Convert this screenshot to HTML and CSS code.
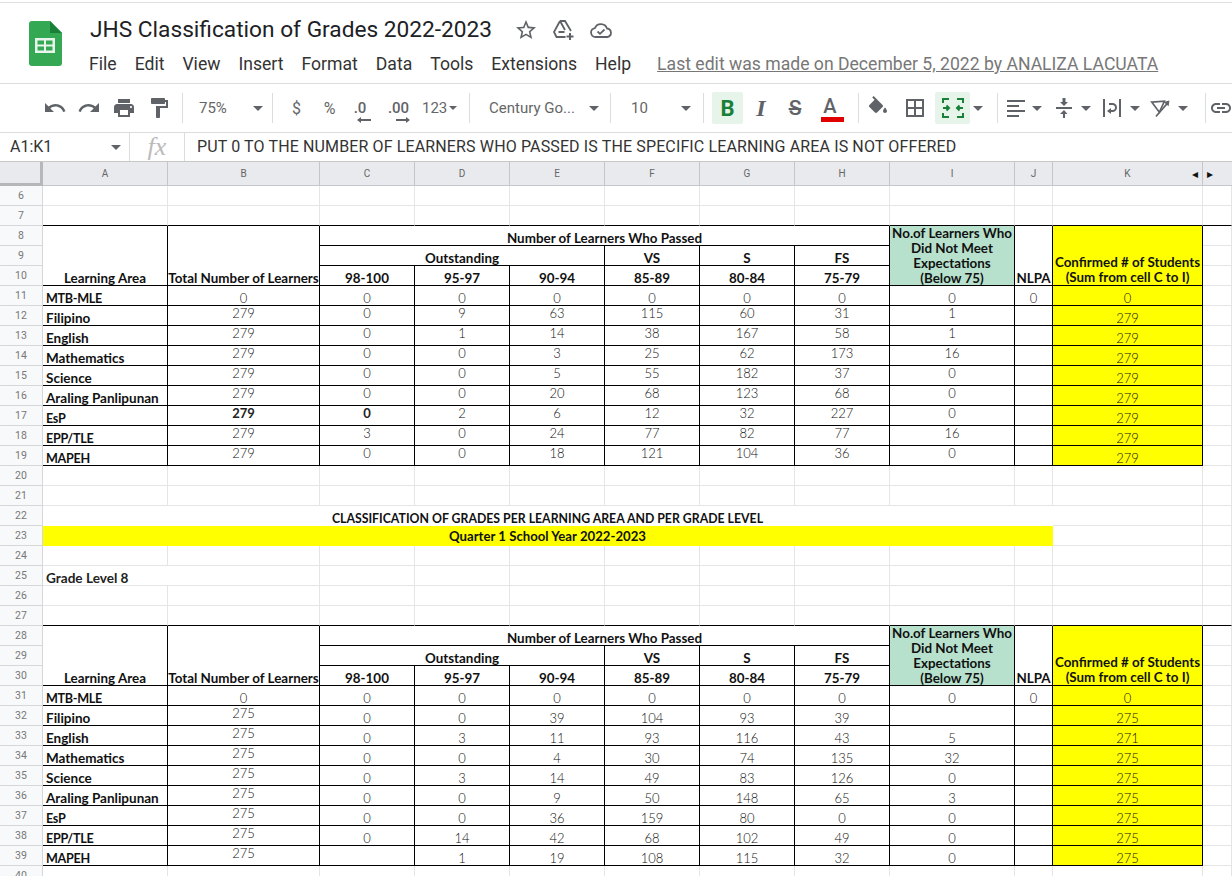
FILE: index.html
```html
<!DOCTYPE html>
<html lang="en">
<head>
<meta charset="utf-8">
<title>JHS Classification of Grades 2022-2023</title>
<link rel="stylesheet" href="styles.css">
</head>
<body>
<header class="top">
  <svg class="logo" width="33" height="45" viewBox="0 0 33 45">
    <path d="M3 0h18l12 12v30a3 3 0 0 1-3 3H3a3 3 0 0 1-3-3V3a3 3 0 0 1 3-3z" fill="#34a853"/>
    <path d="M21 0l12 12H21z" fill="#188038"/>
    <path d="M6 17h20v15H6z" fill="#e8f5ec"/>
    <path d="M8.500 19.500h6.500v4H8.500zM17 19.500h6.500v4H17zM8.500 25.500h6.500v4H8.500zM17 25.500h6.500v4H17z" fill="#34a853"/>
  </svg>
  <div class="doc">
    <div class="title-row">
      <h1 class="title">JHS Classification of Grades 2022-2023</h1>
      <svg class="ti star" width="24" height="24" viewBox="0 0 24 24"><path fill="#5f6368" d="M22 9.240l-7.190-.620L12 2 9.190 8.630 2 9.240l5.460 4.730L5.820 21 12 17.270 18.180 21l-1.630-7.030L22 9.240zM12 15.400l-3.760 2.270 1-4.280-3.320-2.880 4.380-.380L12 6.100l1.710 4.040 4.380.380-3.320 2.880 1 4.280L12 15.400z"/></svg>
      <svg class="ti drive" width="24" height="24" viewBox="0 0 24 24" fill="none" stroke="#5f6368" stroke-width="1.800"><path d="M9 3h5l6 10M9 3L3 14l2.500 5h9M9 3l5 9M7.500 14h6"/><path d="M19 15v7M15.500 18.500h7" stroke-width="2"/></svg>
      <svg class="ti cloud" width="24" height="24" viewBox="0 0 24 24" fill="none" stroke="#5f6368" stroke-width="1.800"><path d="M6.500 19a4.500 4.500 0 0 1-.6-8.950A6.500 6.500 0 0 1 18 10.500a4.300 4.300 0 0 1 .5 8.500z"/><path d="M8.500 13.500l2.500 2.300 4.500-4.300"/></svg>
    </div>
    <nav class="menu">
      <span>File</span><span>Edit</span><span>View</span><span>Insert</span><span>Format</span><span>Data</span><span>Tools</span><span>Extensions</span><span>Help</span>
      <a class="last-edit">Last edit was made on December 5, 2022 by ANALIZA LACUATA</a>
    </nav>
  </div>
</header>

<div class="toolbar">
  <span class="tool w34"><svg width="24" height="24" viewBox="0 0 24 24"><path d="M12.500 8c-2.650 0-5.050.990-6.900 2.600L2 7v9h9l-3.620-3.620c1.390-1.160 3.160-1.880 5.120-1.880 3.540 0 6.550 2.310 7.600 5.500l2.370-.780C21.080 11.030 17.150 8 12.500 8z"/></svg></span>
  <span class="tool w34"><svg width="24" height="24" viewBox="0 0 24 24"><path d="M18.400 10.600C16.550 8.990 14.150 8 11.500 8c-4.650 0-8.580 3.030-9.960 7.220L3.900 16c1.050-3.190 4.050-5.500 7.600-5.500 1.950 0 3.730.720 5.120 1.880L13 16h9V7l-3.600 3.600z"/></svg></span>
  <span class="tool w35"><svg width="24" height="24" viewBox="0 0 24 24"><path d="M19 8H5c-1.660 0-3 1.340-3 3v6h4v4h12v-4h4v-6c0-1.660-1.340-3-3-3zm-3 11H8v-5h8v5zm3-7c-.550 0-1-.450-1-1s.450-1 1-1 1 .450 1 1-.450 1-1 1zm-1-9H6v4h12V3z"/></svg></span>
  <span class="tool w35"><svg width="24" height="24" viewBox="0 0 24 24"><path d="M18 4V3c0-.550-.450-1-1-1H5c-.550 0-1 .450-1 1v4c0 .550.450 1 1 1h12c.550 0 1-.450 1-1V6h1v4H9v11c0 .550.450 1 1 1h2c.550 0 1-.450 1-1v-9h8V4h-3z"/></svg></span>
  <span class="sep s6"></span>
  <span class="pick w89 pl16 pr9">75%<i class="caret"></i></span>
  <span class="sep after6"></span>
  <span class="tool w35 sym">$</span>
  <span class="tool w31 sym">%</span>
  <span class="tool w30 dec">.0<svg class="arrow" width="14" height="6" viewBox="0 0 14 6"><path d="M0 3l4-3v2h10v2H4v2z"/></svg></span>
  <span class="tool w47 dec">.00<svg class="arrow" width="14" height="6" viewBox="0 0 14 6"><path d="M14 3l-4-3v2H0v2h10v2z"/></svg></span>
  <span class="pick w47">123<i class="caret small"></i></span>
  <span class="sep"></span>
  <span class="pick w140 pl19 pr11">Century Go...<i class="caret"></i></span>
  <span class="sep"></span>
  <span class="pick w92 pl20 pr12">10<i class="caret"></i></span>
  <span class="sep s7"></span>
  <span class="tool w31 on bold">B</span>
  <span class="tool w36 ital">I</span>
  <span class="tool w32 strike">S</span>
  <span class="tool w38 color">A<i class="red"></i></span>
  <span class="sep s9"></span>
  <span class="tool w38"><svg width="24" height="24" viewBox="0 0 24 24"><path d="M16.560 8.940L7.620 0 6.210 1.410l2.380 2.380-5.150 5.150c-.590.590-.590 1.540 0 2.120l5.500 5.500c.290.290.680.440 1.060.440s.770-.150 1.060-.440l5.500-5.500c.590-.580.590-1.530 0-2.120zM19 11.500s-2 2.170-2 3.500c0 1.100.900 2 2 2s2-.900 2-2c0-1.330-2-3.500-2-3.500z"/></svg></span>
  <span class="tool w36"><svg width="24" height="24" viewBox="0 0 24 24"><path d="M3 3v18h18V3H3zm8 16H5v-6h6v6zm0-8H5V5h6v6zm8 8h-6v-6h6v6zm0-8h-6V5h6v6z"/></svg></span>
  <span class="tool w35 ml2 on"><svg width="24" height="24" viewBox="0 0 24 24" fill="none" stroke="#188038" stroke-width="2"><path d="M2 7V3h6M16 3h6v4M22 17v4h-6M8 21H2v-4"/><path d="M2 12h6M5.500 9.500L8 12l-2.500 2.500M22 12h-6M18.500 9.500L16 12l2.500 2.500"/></svg></span>
  <span class="pick w16 center"><i class="caret"></i></span>
  <span class="sep s11"></span>
  <span class="pick w46 pl8 gap6"><svg width="20" height="24" viewBox="0 0 20 24"><path d="M1 4h18v2H1zM1 9h12v2H1zM1 14h18v2H1zM1 19h12v2H1z"/></svg><i class="caret"></i></span>
  <span class="pick w52 pl8 gap5"><svg width="24" height="24" viewBox="0 0 24 24"><path d="M4 11h16v2H4zM12 2l-1.500 0v4H8l4 4 4-4h-2.500V2zM11 22h2v-4h2.500L12 14l-4 4h3z"/></svg><i class="caret"></i></span>
  <span class="pick w49 pl4 gap6"><svg width="24" height="24" viewBox="0 0 24 24"><path d="M3 3h2v18H3zM19 3h2v18h-2z"/><path d="M9 8h3.500a3 3 0 0 1 0 7H10" fill="none" stroke="#5f6368" stroke-width="2"/><path d="M11 12l-4 3 4 3z"/></svg><i class="caret"></i></span>
  <span class="pick w49 pl5 gap6"><svg width="22" height="22" viewBox="0 0 26 24"><path d="M2 5l15-1-6 13z" fill="none" stroke="#5f6368" stroke-width="2"/><path d="M7 22L21 6" stroke="#5f6368" stroke-width="2"/><path d="M23 3l-1 7-6-5z"/></svg><i class="caret"></i></span>
  <span class="sep s11"></span>
  <span class="tool w30 link"><svg width="24" height="24" viewBox="0 0 24 24"><path d="M3.900 12c0-1.710 1.390-3.100 3.100-3.100h4V7H7c-2.760 0-5 2.240-5 5s2.240 5 5 5h4v-1.900H7c-1.710 0-3.100-1.390-3.100-3.100zM8 13h8v-2H8v2zm9-6h-4v1.900h4c1.710 0 3.100 1.390 3.100 3.100s-1.390 3.100-3.100 3.100h-4V17h4c2.760 0 5-2.240 5-5s-2.240-5-5-5z"/></svg></span>
</div>

<div class="formula">
  <div class="namebox">A1:K1<i class="caret"></i></div>
  <div class="fx">fx</div>
  <div class="ftext">PUT 0 TO THE NUMBER OF LEARNERS WHO PASSED IS THE SPECIFIC LEARNING AREA IS NOT OFFERED</div>
</div>

<main class="grid-wrap">
<table class="sheet">
  <colgroup>
    <col class="c-rh"><col class="c-a"><col class="c-b"><col class="c-n"><col class="c-n"><col class="c-n"><col class="c-n"><col class="c-n"><col class="c-n"><col class="c-a"><col class="c-j"><col class="c-k"><col class="c-l">
  </colgroup>
  <thead>
    <tr><th class="corner"></th><th>A</th><th>B</th><th>C</th><th>D</th><th>E</th><th>F</th><th>G</th><th>H</th><th>I</th><th>J</th><th class="kh">K<span class="scroll">&#9666;</span></th><th class="lh">&#9656;</th></tr>
  </thead>
  <tbody>
    <tr><th>6</th><td></td><td></td><td></td><td></td><td></td><td></td><td></td><td></td><td></td><td></td><td></td><td></td></tr>
    <tr class="edge"><th>7</th><td></td><td></td><td></td><td></td><td></td><td></td><td></td><td></td><td></td><td></td><td></td><td></td></tr>

    <tr><th>8</th><td class="k hd" rowspan="3">Learning Area</td><td class="k hd" rowspan="3">Total Number of Learners</td><td class="k hd" colspan="6">Number of Learners Who Passed</td><td class="k hd green" rowspan="3"><div class="note">No.of Learners Who Did Not Meet Expectations (Below 75)</div></td><td class="k hd" rowspan="3">NLPA</td><td class="k hd yellow two" rowspan="3">Confirmed # of Students<br>(Sum from cell C to I)</td><td></td></tr>
    <tr><th>9</th><td class="k hd" colspan="3">Outstanding</td><td class="k hd">VS</td><td class="k hd">S</td><td class="k hd">FS</td><td></td></tr>
    <tr><th>10</th><td class="k hd">98-100</td><td class="k hd">95-97</td><td class="k hd">90-94</td><td class="k hd">85-89</td><td class="k hd">80-84</td><td class="k hd">75-79</td><td></td></tr>

    <tr><th>11</th><td class="k lbl caps">MTB-MLE</td><td class="k">0</td><td class="k">0</td><td class="k">0</td><td class="k">0</td><td class="k">0</td><td class="k">0</td><td class="k">0</td><td class="k">0</td><td class="k">0</td><td class="k yellow">0</td><td></td></tr>
    <tr class="up"><th>12</th><td class="k lbl">Filipino</td><td class="k">279</td><td class="k">0</td><td class="k">9</td><td class="k">63</td><td class="k">115</td><td class="k">60</td><td class="k">31</td><td class="k">1</td><td class="k"></td><td class="k yellow">279</td><td></td></tr>
    <tr class="up"><th>13</th><td class="k lbl">English</td><td class="k">279</td><td class="k">0</td><td class="k">1</td><td class="k">14</td><td class="k">38</td><td class="k">167</td><td class="k">58</td><td class="k">1</td><td class="k"></td><td class="k yellow">279</td><td></td></tr>
    <tr class="up"><th>14</th><td class="k lbl">Mathematics</td><td class="k">279</td><td class="k">0</td><td class="k">0</td><td class="k">3</td><td class="k">25</td><td class="k">62</td><td class="k">173</td><td class="k">16</td><td class="k"></td><td class="k yellow">279</td><td></td></tr>
    <tr class="up"><th>15</th><td class="k lbl">Science</td><td class="k">279</td><td class="k">0</td><td class="k">0</td><td class="k">5</td><td class="k">55</td><td class="k">182</td><td class="k">37</td><td class="k">0</td><td class="k"></td><td class="k yellow">279</td><td></td></tr>
    <tr class="up"><th>16</th><td class="k lbl">Araling Panlipunan</td><td class="k">279</td><td class="k">0</td><td class="k">0</td><td class="k">20</td><td class="k">68</td><td class="k">123</td><td class="k">68</td><td class="k">0</td><td class="k"></td><td class="k yellow">279</td><td></td></tr>
    <tr class="up"><th>17</th><td class="k lbl caps">EsP</td><td class="k strong">279</td><td class="k strong">0</td><td class="k">2</td><td class="k">6</td><td class="k">12</td><td class="k">32</td><td class="k">227</td><td class="k">0</td><td class="k"></td><td class="k yellow">279</td><td></td></tr>
    <tr class="up"><th>18</th><td class="k lbl caps">EPP/TLE</td><td class="k">279</td><td class="k">3</td><td class="k">0</td><td class="k">24</td><td class="k">77</td><td class="k">82</td><td class="k">77</td><td class="k">16</td><td class="k"></td><td class="k yellow">279</td><td></td></tr>
    <tr class="up"><th>19</th><td class="k lbl caps">MAPEH</td><td class="k">279</td><td class="k">0</td><td class="k">0</td><td class="k">18</td><td class="k">121</td><td class="k">104</td><td class="k">36</td><td class="k">0</td><td class="k"></td><td class="k yellow">279</td><td></td></tr>

    <tr><th>20</th><td></td><td></td><td></td><td></td><td></td><td></td><td></td><td></td><td></td><td></td><td></td><td></td></tr>
    <tr><th>21</th><td></td><td></td><td></td><td></td><td></td><td></td><td></td><td></td><td></td><td></td><td></td><td></td></tr>
    <tr><th>22</th><td class="hd plain banner" colspan="10">CLASSIFICATION OF GRADES PER LEARNING AREA AND PER GRADE LEVEL</td><td></td><td></td></tr>
    <tr><th>23</th><td class="hd yellow plain quarter" colspan="10">Quarter 1 School Year 2022-2023</td><td></td><td></td></tr>
    <tr><th>24</th><td></td><td></td><td></td><td></td><td></td><td></td><td></td><td></td><td></td><td></td><td></td><td></td></tr>
    <tr><th>25</th><td class="grade" colspan="2">Grade Level 8</td><td></td><td></td><td></td><td></td><td></td><td></td><td></td><td></td><td></td><td></td></tr>
    <tr><th>26</th><td></td><td></td><td></td><td></td><td></td><td></td><td></td><td></td><td></td><td></td><td></td><td></td></tr>
    <tr class="edge"><th>27</th><td></td><td></td><td></td><td></td><td></td><td></td><td></td><td></td><td></td><td></td><td></td><td></td></tr>

    <tr><th>28</th><td class="k hd" rowspan="3">Learning Area</td><td class="k hd" rowspan="3">Total Number of Learners</td><td class="k hd" colspan="6">Number of Learners Who Passed</td><td class="k hd green" rowspan="3"><div class="note">No.of Learners Who Did Not Meet Expectations (Below 75)</div></td><td class="k hd" rowspan="3">NLPA</td><td class="k hd yellow two" rowspan="3">Confirmed # of Students<br>(Sum from cell C to I)</td><td></td></tr>
    <tr><th>29</th><td class="k hd" colspan="3">Outstanding</td><td class="k hd">VS</td><td class="k hd">S</td><td class="k hd">FS</td><td></td></tr>
    <tr><th>30</th><td class="k hd">98-100</td><td class="k hd">95-97</td><td class="k hd">90-94</td><td class="k hd">85-89</td><td class="k hd">80-84</td><td class="k hd">75-79</td><td></td></tr>

    <tr><th>31</th><td class="k lbl caps">MTB-MLE</td><td class="k">0</td><td class="k">0</td><td class="k">0</td><td class="k">0</td><td class="k">0</td><td class="k">0</td><td class="k">0</td><td class="k">0</td><td class="k">0</td><td class="k yellow">0</td><td></td></tr>
    <tr><th>32</th><td class="k lbl">Filipino</td><td class="k top-al">275</td><td class="k">0</td><td class="k">0</td><td class="k">39</td><td class="k">104</td><td class="k">93</td><td class="k">39</td><td class="k"></td><td class="k"></td><td class="k yellow">275</td><td></td></tr>
    <tr><th>33</th><td class="k lbl">English</td><td class="k top-al">275</td><td class="k">0</td><td class="k">3</td><td class="k">11</td><td class="k">93</td><td class="k">116</td><td class="k">43</td><td class="k">5</td><td class="k"></td><td class="k yellow">271</td><td></td></tr>
    <tr><th>34</th><td class="k lbl">Mathematics</td><td class="k top-al">275</td><td class="k">0</td><td class="k">0</td><td class="k">4</td><td class="k">30</td><td class="k">74</td><td class="k">135</td><td class="k">32</td><td class="k"></td><td class="k yellow">275</td><td></td></tr>
    <tr><th>35</th><td class="k lbl">Science</td><td class="k top-al">275</td><td class="k">0</td><td class="k">3</td><td class="k">14</td><td class="k">49</td><td class="k">83</td><td class="k">126</td><td class="k">0</td><td class="k"></td><td class="k yellow">275</td><td></td></tr>
    <tr><th>36</th><td class="k lbl">Araling Panlipunan</td><td class="k top-al">275</td><td class="k">0</td><td class="k">0</td><td class="k">9</td><td class="k">50</td><td class="k">148</td><td class="k">65</td><td class="k">3</td><td class="k"></td><td class="k yellow">275</td><td></td></tr>
    <tr><th>37</th><td class="k lbl caps">EsP</td><td class="k top-al">275</td><td class="k">0</td><td class="k">0</td><td class="k">36</td><td class="k">159</td><td class="k">80</td><td class="k">0</td><td class="k">0</td><td class="k"></td><td class="k yellow">275</td><td></td></tr>
    <tr><th>38</th><td class="k lbl caps">EPP/TLE</td><td class="k top-al">275</td><td class="k">0</td><td class="k">14</td><td class="k">42</td><td class="k">68</td><td class="k">102</td><td class="k">49</td><td class="k">0</td><td class="k"></td><td class="k yellow">275</td><td></td></tr>
    <tr><th>39</th><td class="k lbl caps">MAPEH</td><td class="k top-al">275</td><td class="k"></td><td class="k">1</td><td class="k">19</td><td class="k">108</td><td class="k">115</td><td class="k">32</td><td class="k">0</td><td class="k"></td><td class="k yellow">275</td><td></td></tr>

    <tr><th>40</th><td></td><td></td><td></td><td></td><td></td><td></td><td></td><td></td><td></td><td></td><td></td><td></td></tr>
  </tbody>
</table>
</main>
</body>
</html>
```
FILE: styles.css
```css
* { box-sizing: border-box; }
html, body { margin: 0; height: 100%; }
body {
  height: 876px;
  overflow: hidden;
  display: flex;
  flex-direction: column;
  background: #fff;
  font-family: Roboto, "Liberation Sans", sans-serif;
  color: #222;
  padding-top: 2px;
}

/* Title block */
.top {
  height: 82px;
  flex: none;
  display: flex;
  border-top: 1px solid #e0e0e0;
  border-bottom: 1px solid #dcdcdc;
}
.logo { margin: 18px 0 0 29px; flex: none; }
.doc { margin-left: 27px; flex: 1; }
.title-row { display: flex; align-items: center; height: 26px; margin-top: 14px; }
.title { margin: 0 0 0 1px; font-size: 22.7px; font-weight: 400; line-height: 26px; color: #202124; white-space: nowrap; }
.ti { flex: none; }
.star { margin-left: 22px; }
.drive { margin-left: 13px; }
.cloud { margin-left: 14px; }
.menu { display: flex; align-items: center; gap: 18px; font-size: 17.6px; line-height: 22px; margin-top: 10px; color: #333; }
.last-edit { margin-left: 8px; color: #777; text-decoration: underline; white-space: nowrap; }

/* Toolbar */
.toolbar {
  flex: none;
  height: 49px;
  display: flex;
  align-items: center;
  padding-left: 38px;
  border-bottom: 1px solid #dcdcdc;
  color: #666;
  font-size: 15px;
  overflow: hidden;
}
.toolbar svg { fill: #5f6368; flex: none; }
.toolbar svg[fill="none"] { fill: none; }
.tool { display: flex; align-items: center; justify-content: center; height: 32px; flex: none; }
.pick { display: flex; align-items: center; justify-content: space-between; height: 32px; flex: none; white-space: nowrap; }
.sep { width: 1px; height: 30px; background: #dadce0; flex: none; }
.s6 { margin: 0 0 0 6px; }
.s7 { margin: 0 8px 0 0; }
.s9 { margin-left: 9px; }
.s11 { margin: 0 0 0 11px; }
.after6 { margin-right: 6px; }
.w16 { width: 16px; } .w30 { width: 30px; } .w31 { width: 31px; } .w32 { width: 32px; }
.w34 { width: 34px; } .w35 { width: 35px; } .w36 { width: 36px; }
.w38 { width: 38px; } .w46 { width: 46px; } .w47 { width: 47px; }
.w49 { width: 49px; } .w52 { width: 52px; } .w89 { width: 89px; } .w92 { width: 92px; }
.w140 { width: 140px; }
.pl4 { padding-left: 4px; } .pl5 { padding-left: 5px; } .pl8 { padding-left: 8px; }
.pl16 { padding-left: 16px; } .pl19 { padding-left: 19px; } .pl20 { padding-left: 20px; }
.pr9 { padding-right: 9px; } .pr11 { padding-right: 11px; } .pr12 { padding-right: 12px; }
.ml2 { margin-left: 2px; }
.center { justify-content: center; }
.gap5 { justify-content: flex-start; gap: 5px; }
.gap6 { justify-content: flex-start; gap: 6px; }
.caret { display: inline-block; width: 0; height: 0; border-left: 5px solid transparent; border-right: 5px solid transparent; border-top: 5px solid #5f6368; flex: none; }
.caret.small { border-left-width: 4px; border-right-width: 4px; border-top-width: 4px; margin-right: 12px; }
.sym { font-size: 16px; }
.dec { position: relative; font-size: 15px; font-weight: 500; color: #5f6368; }
.arrow { position: absolute; left: 50%; bottom: 1px; margin-left: -3px; }
.on { background: #e6f4ea; border-radius: 2px; }
.bold { color: #188038; font-size: 22px; font-weight: 700; }
.ital { color: #5f6368; font: italic 700 24px "Liberation Serif", serif; }
.strike { color: #5f6368; font-size: 21px; font-weight: 500; text-decoration: line-through; }
.color { position: relative; color: #5f6368; font-size: 20px; font-weight: 500; padding-bottom: 5px; }
.red { position: absolute; left: 10px; right: 5px; bottom: 2px; height: 5px; background: #e00000; }

/* Formula bar */
.formula {
  flex: none;
  height: 29px;
  display: flex;
  align-items: center;
  border-bottom: 1px solid #c8c8c8;
}
.namebox {
  width: 130px;
  height: 28px;
  display: flex;
  align-items: center;
  justify-content: space-between;
  padding: 0 8px 2px 10px;
  border-right: 1px solid #dadce0;
  font-size: 16px;
  color: #333;
}
.namebox .caret { margin-top: 3px; }
.fx {
  width: 55px;
  height: 28px;
  text-align: center;
  border-right: 1px solid #dadce0;
  font: italic 26px/28px "Liberation Serif", serif;
  color: #bbb;
}
.ftext { margin: 0 0 2px 12px; font-size: 16px; color: #333; white-space: nowrap; letter-spacing: .13px; }

/* Sheet */
.grid-wrap { flex: 1; min-height: 0; overflow: hidden; }
.sheet {
  table-layout: fixed;
  width: 1232px;
  border-collapse: separate;
  border-spacing: 0;
  font-family: Lato, "Open Sans", sans-serif;
  font-size: 13px;
  line-height: 13px;
  color: #111;
}
.c-rh { width: 43px; }
.c-a { width: 125px; }
.c-b { width: 152px; }
.c-n { width: 95px; }
.c-j { width: 38px; }
.c-k { width: 150px; }
.c-l { width: 29px; }
.sheet thead th {
  height: 24px;
  background: #e8eaed;
  border-right: 1px solid #c4c7c9;
  border-bottom: 1px solid #c4c7c9;
  font: 400 10px Roboto, sans-serif;
  color: #666;
  padding: 0;
  position: relative;
}
.sheet thead .corner { border-right: 3px solid #b5b7b9; border-bottom: 3px solid #b5b7b9; }
.sheet thead .lh { border-right: 0; color: #111; font-size: 12px; text-align: left; padding-left: 4px; }
.scroll { position: absolute; right: 4px; top: 5px; color: #111; font-size: 12px; }
.sheet tbody tr { height: 20px; }
.sheet tbody th {
  padding: 0;
  background: #f8f9fa;
  border-right: 1px solid #d5d7d9;
  border-bottom: 1px solid #d5d7d9;
  font: 400 10.500px Roboto, sans-serif;
  color: #777;
}
.sheet td {
  padding: 0;
  border-right: 1px solid #e4e5e6;
  border-bottom: 1px solid #e4e5e6;
  text-align: center;
  vertical-align: bottom;
  font-weight: 300;
  white-space: nowrap;
  overflow: visible;
}
.sheet td.k { border-right-color: #000; border-bottom-color: #000; }
.sheet .edge td { border-bottom-color: #000; }
.sheet .up td { vertical-align: top; line-height: 15px; }
.sheet .up td.lbl, .sheet .up td.yellow { vertical-align: bottom; line-height: 13px; }
.sheet td.top-al { vertical-align: top; line-height: 15px; }
.sheet td.lbl { text-align: left; padding-left: 3px; font-weight: 700; color: #111; font-size: 13.5px; }
.sheet td.caps { font-size: 12.6px; letter-spacing: -.3px; }
.sheet td.hd { font-weight: 700; color: #111; font-size: 13.4px; }
.sheet td.two { line-height: 15px; }
.sheet td.banner { font-size: 12.3px; }
.sheet td.quarter { font-size: 13.2px; line-height: 17px; }
.sheet td.strong { font-weight: 700; color: #222; }
.sheet td.plain { border-right-color: transparent; border-bottom-color: transparent; }
.sheet td.yellow { background: #ff0; }
.sheet td.green { background: #b7e1cd; white-space: normal; }
.note { line-height: 15px; margin-bottom: -1px; padding: 0 2px; }
.sheet td.grade { text-align: left; padding-left: 3px; font-weight: 700; color: #222; font-size: 13.6px; }
```
